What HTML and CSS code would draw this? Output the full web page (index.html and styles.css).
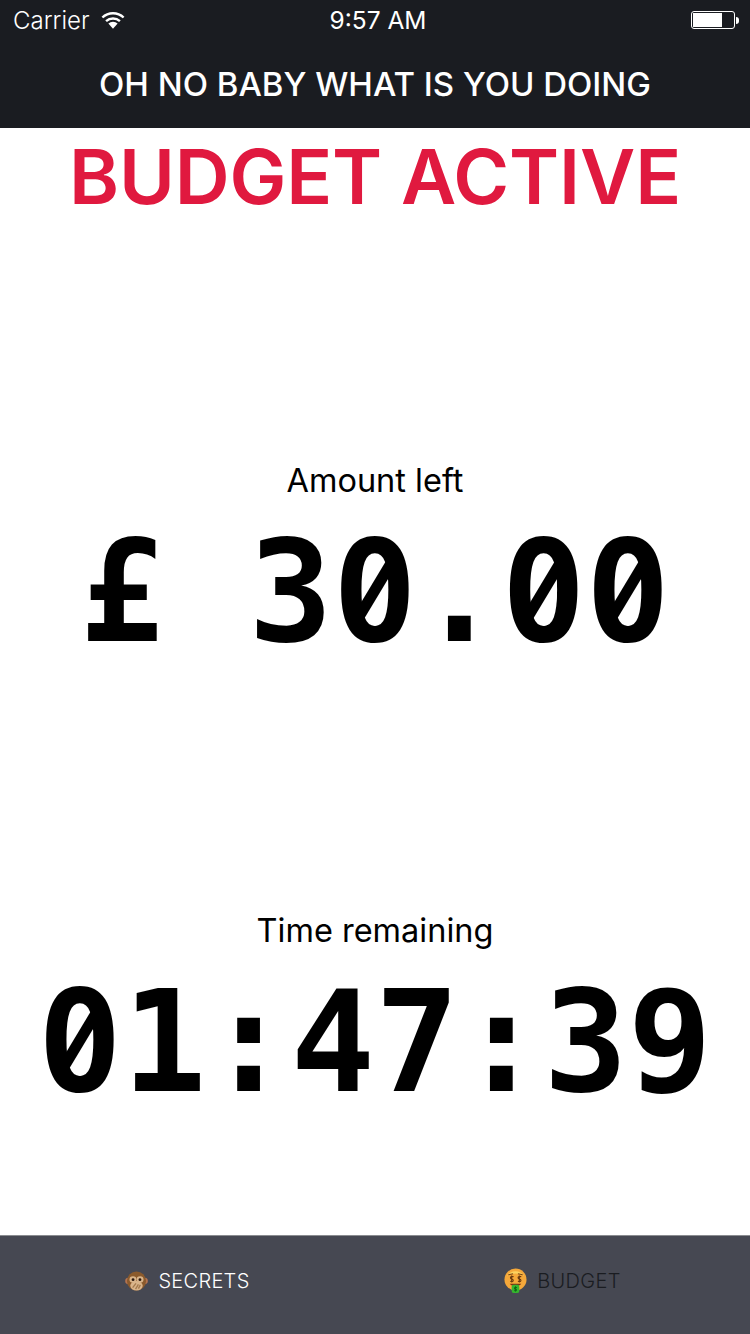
FILE: index.html
```html
<!DOCTYPE html>
<html lang="en">
<head>
    <meta charset="UTF-8">
    <meta name="viewport" content="width=device-width, initial-scale=1.0">
    <title>Budget</title>
    <link rel="stylesheet" href="styles.css">
</head>
<body>
    <div class="app">
        <header class="top">
            <div class="status-bar">
                <div class="status-left">
                    <span>Carrier</span>
                    <svg class="wifi" width="24" height="18" viewBox="0 0 26 19">
                        <path d="M1.5 6.8 A16.5 16.5 0 0 1 24.5 6.8" fill="none" stroke="#fff" stroke-width="2.6"/>
                        <path d="M5.5 10.8 A11 11 0 0 1 20.5 10.8" fill="none" stroke="#fff" stroke-width="2.6"/>
                        <path d="M13 19 L8 13.3 A7.2 7.2 0 0 1 18 13.3 Z" fill="#fff"/>
                    </svg>
                </div>
                <div class="status-time">9:57 AM</div>
                <div class="status-right">
                    <div class="battery"><div class="battery-level"></div></div>
                    <div class="battery-cap"></div>
                </div>
            </div>
            <div class="nav-title">OH NO BABY WHAT IS YOU DOING</div>
        </header>

        <main class="content">
            <h1 class="budget-title">BUDGET ACTIVE</h1>
            <section class="stat">
                <div class="stat-label">Amount left</div>
                <div class="stat-value">£ 3<span class="zero">0</span>.<span class="zero">0</span><span class="zero">0</span></div>
            </section>
            <section class="stat">
                <div class="stat-label">Time remaining</div>
                <div class="stat-value"><span class="zero">0</span>1:47:39</div>
            </section>
        </main>

        <nav class="tabs">
            <div class="tab active">
                <svg class="tab-icon" width="23" height="24" viewBox="0 0 24 24">
                    <circle cx="3.5" cy="12" r="3.3" fill="#b5734f"/>
                    <circle cx="20.5" cy="12" r="3.3" fill="#b5734f"/>
                    <circle cx="12" cy="12" r="10" fill="#8a5a2c"/>
                    <ellipse cx="8.3" cy="10.5" rx="3.6" ry="3.4" fill="#d9b48a"/>
                    <ellipse cx="15.7" cy="10.5" rx="3.6" ry="3.4" fill="#d9b48a"/>
                    <ellipse cx="12" cy="17" rx="6.5" ry="5" fill="#d9b48a"/>
                    <circle cx="8.4" cy="10.6" r="1.5" fill="#2b1a10"/>
                    <circle cx="15.6" cy="10.6" r="1.5" fill="#2b1a10"/>
                    <path d="M8 19 L11.5 14.5 M11 20.5 L14 15.5 M14 20 L16 16" stroke="#a47a4e" stroke-width="1.4"/>
                </svg>
                <span>SECRETS</span>
            </div>
            <div class="tab">
                <svg class="tab-icon" width="23" height="25" viewBox="0 0 24 26">
                    <circle cx="12" cy="12" r="11.5" fill="#f5a83a"/>
                    <path d="M3 8 A11 11 0 0 1 21 8 A20 20 0 0 0 3 8 Z" fill="#fbd35f"/>
                    <path d="M4.5 7 L9.5 6 M14.5 6 L19.5 7" stroke="#7a4414" stroke-width="1.1"/>
                    <path d="M10 9 Q7 8 6.7 10 Q6.7 11.5 8 11.5 Q9.8 11.7 9.6 13.2 Q9 14.6 6.5 13.8 M8 7.8 V15" fill="none" stroke="#6b3a10" stroke-width="1.2"/>
                    <path d="M18 9 Q15 8 14.7 10 Q14.7 11.5 16 11.5 Q17.8 11.7 17.6 13.2 Q17 14.6 14.5 13.8 M16 7.8 V15" fill="none" stroke="#6b3a10" stroke-width="1.2"/>
                    <path d="M6 16.5 H18 Q16.5 19 12 19 Q7.5 19 6 16.5 Z" fill="#7a3414"/>
                    <rect x="8" y="17.5" width="8" height="8.5" rx="2" fill="#35b52e"/>
                    <path d="M12 19 V24.5 M13.5 20.3 H11 V22 H13 V23.6 H10.6" fill="none" stroke="#0e6a14" stroke-width="1"/>
                </svg>
                <span>BUDGET</span>
            </div>
        </nav>
    </div>
</body>
</html>
```

FILE: styles.css
```css
html, body {
    margin: 0;
    height: 100%;
    background-color: #ffffff;
    font-family: Inter, "Liberation Sans", sans-serif;
}
.app {
    width: 750px;
    height: 1334px;
    display: flex;
    flex-direction: column;
    overflow: hidden;
}
.top {
    background-color: #1a1c21;
    color: #ffffff;
    height: 128px;
    flex-shrink: 0;
}
.status-bar {
    height: 40px;
    display: grid;
    grid-template-columns: 1fr auto 1fr;
    align-items: center;
    padding: 0 11px 0 13px;
    font-size: 24px;
    font-weight: 300;
}
.status-left {
    display: flex;
    align-items: center;
    gap: 11px;
}
.wifi {
    margin-top: -1px;
}
.status-time {
    font-size: 24.5px;
    font-weight: 400;
    padding-left: 4px;
}
.status-right {
    display: flex;
    justify-content: flex-end;
    align-items: center;
}
.battery {
    width: 40px;
    height: 14px;
    border: 1.5px solid #ffffff;
    border-radius: 3px;
    padding: 1px;
    margin-right: 1px;
}
.battery-level {
    width: 29px;
    height: 100%;
    background-color: #ffffff;
}
.battery-cap {
    width: 3px;
    height: 7px;
    background-color: #ffffff;
    border-radius: 0 3px 3px 0;
}
.nav-title {
    height: 88px;
    display: flex;
    justify-content: center;
    align-items: center;
    font-size: 33px;
    font-weight: 500;
}
.content {
    flex: 1;
    display: flex;
    flex-direction: column;
}
.budget-title {
    height: 207px;
    margin: 0;
    text-align: center;
    color: #e0193f;
    font-size: 76px;
    font-weight: 600;
    letter-spacing: -0.15px;
    line-height: 96px;
}
.stat {
    flex: 1;
    padding-top: 14px;
    display: flex;
    flex-direction: column;
    justify-content: center;
    align-items: center;
}
.stat-label {
    font-size: 32.5px;
    font-weight: 400;
    line-height: 40px;
    margin-bottom: 12px;
    color: #000000;
}
.stat-value {
    font-family: "DejaVu Sans Mono", "Liberation Mono", monospace;
    font-size: 140px;
    font-weight: 700;
    line-height: 160px;
    color: #000000;
    white-space: pre;
}
/* DejaVu has a dotted zero, the screenshot has a slashed one */
.zero {
    position: relative;
}
.zero::before {
    content: "";
    position: absolute;
    left: 50%;
    top: 79px;
    width: 26px;
    height: 72px;
    border-radius: 50%;
    background-color: #ffffff;
    transform: translate(-50%, -50%);
}
.zero::after {
    content: "";
    position: absolute;
    left: 50%;
    top: 79px;
    width: 11px;
    height: 72px;
    background-color: #000000;
    transform: translate(-50%, -50%) rotate(31deg);
}
.tabs {
    height: 99px;
    flex-shrink: 0;
    box-sizing: border-box;
    border-top: 1px solid #8a8c90;
    padding-bottom: 9px;
    background-color: #464852;
    display: grid;
    grid-template-columns: 1fr 1fr;
}
.tab {
    display: flex;
    justify-content: center;
    align-items: center;
    gap: 10px;
    font-size: 20px;
    font-weight: 300;
    letter-spacing: 0.3px;
    color: #1a1c21;
}
.tab.active {
    color: #ffffff;
}
```
